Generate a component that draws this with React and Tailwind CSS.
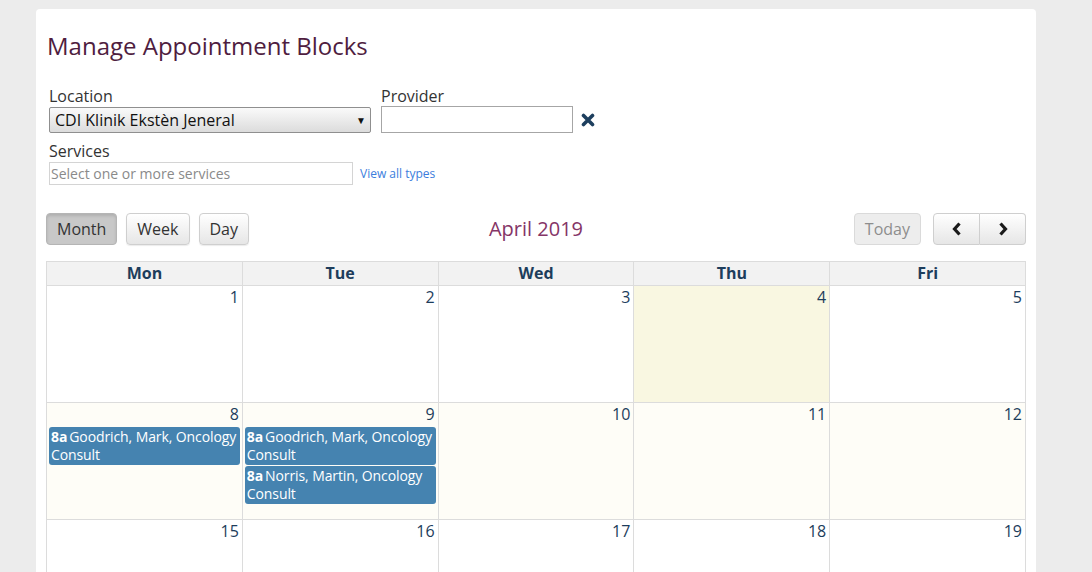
const days = ["Mon", "Tue", "Wed", "Thu", "Fri"];

const weeks = [
  [
    { n: 1 },
    { n: 2 },
    { n: 3 },
    { n: 4, today: true },
    { n: 5 },
  ],
  [
    {
      n: 8,
      tint: true,
      events: [{ time: "8a", name: "Goodrich, Mark, Oncology Consult" }],
    },
    {
      n: 9,
      tint: true,
      events: [
        { time: "8a", name: "Goodrich, Mark, Oncology Consult" },
        { time: "8a", name: "Norris, Martin, Oncology Consult" },
      ],
    },
    { n: 10, tint: true },
    { n: 11, tint: true },
    { n: 12, tint: true },
  ],
  [{ n: 15 }, { n: 16 }, { n: 17 }, { n: 18 }, { n: 19 }],
];

const btn =
  "h-8 px-[10px] rounded-[4px] border border-[#cfcfcf] text-[16px] text-[#333] bg-gradient-to-b from-white to-[#e6e6e6] shadow-[0_1px_1px_rgba(0,0,0,0.08)]";

function Chevron({ dir }) {
  return (
    <svg width="12" height="14" viewBox="0 0 12 14">
      {dir === "left" ? (
        <path d="M8.5 1.5 L3.5 7 L8.5 12.5" fill="none" stroke="#1a1a1a" strokeWidth="3.2" strokeLinejoin="miter" />
      ) : (
        <path d="M3.5 1.5 L8.5 7 L3.5 12.5" fill="none" stroke="#1a1a1a" strokeWidth="3.2" strokeLinejoin="miter" />
      )}
    </svg>
  );
}

export default function App() {
  return (
    <div
      className="min-h-[572px] bg-[#ececec] pt-[9px] pl-[36px] overflow-hidden"
      style={{ fontFamily: '"Open Sans", "Noto Sans", sans-serif' }}
    >
      <div className="w-[1000px] h-[600px] bg-white rounded-[4px] pt-[21px] px-[10px]">
        {/* ================= TITLE ================= */}
        <h1 className="ml-[1px] text-[24px] leading-[32px] text-[#4f1d40]">
          Manage Appointment Blocks
        </h1>

        {/* ================= FILTERS ================= */}
        <div className="mt-[24px] ml-[3px] flex gap-[10px]">
          <div className="w-[322px]">
            <div className="text-[16px] leading-[20px] text-[#333]">Location</div>
            <div className="mt-[1px] h-[26px] flex items-center justify-between pl-[5px] pr-[4px] border border-[#8f8f8f] rounded-[2px] bg-gradient-to-b from-[#fafafa] to-[#dcdcdc] text-[16px] text-[#111]">
              <span>CDI Klinik Ekstèn Jeneral</span>
              <span className="text-[10px] mt-[1px]">▼</span>
            </div>
          </div>
          <div>
            <div className="text-[16px] leading-[20px] text-[#333]">Provider</div>
            <div className="flex items-center gap-[8px]">
              <div className="w-[192px] h-[27px] border border-[#a6a6a6]" />
              <svg width="14" height="14" viewBox="0 0 14 14">
                <path d="M2.5 2.5 L11.5 11.5 M11.5 2.5 L2.5 11.5" stroke="#1d3f5e" strokeWidth="3.6" strokeLinecap="round" />
              </svg>
            </div>
          </div>
        </div>

        <div className="ml-[3px] mt-[8px] text-[16px] leading-[20px] text-[#333]">Services</div>
        <div className="ml-[3px] mt-[1px] flex items-center gap-[7px]">
          <div className="w-[304px] h-[23px] border border-[#d4d4d4] flex items-center pl-[1px] text-[14px] text-[#8a8a8a]">
            Select one or more services
          </div>
          <span className="text-[12px] text-[#3b7ddd]">View all types</span>
        </div>

        {/* ================= TOOLBAR ================= */}
        <div className="mt-[28px] flex items-center">
          <div className="flex-1 flex gap-[9px]">
            <button className="h-8 px-[10px] rounded-[4px] border border-[#b5b5b5] text-[16px] text-[#333] bg-[#c8c8c8] shadow-[inset_0_2px_3px_rgba(0,0,0,0.12)]">
              Month
            </button>
            <button className={btn}>Week</button>
            <button className={btn}>Day</button>
          </div>
          <div className="text-[20px] text-[#853567]">April 2019</div>
          <div className="flex-1 flex justify-end gap-[12px]">
            <button className="h-8 px-[10px] rounded-[4px] border border-[#dadada] text-[16px] text-[#8d8d8d] bg-[#ededed]">
              Today
            </button>
            <div className="flex">
              <button className="h-8 w-[47px] flex items-center justify-center rounded-l-[4px] border border-[#cfcfcf] bg-gradient-to-b from-white to-[#e6e6e6]">
                <Chevron dir="left" />
              </button>
              <button className="h-8 w-[46px] flex items-center justify-center rounded-r-[4px] border border-l-0 border-[#cfcfcf] bg-gradient-to-b from-white to-[#e6e6e6]">
                <Chevron dir="right" />
              </button>
            </div>
          </div>
        </div>

        {/* ================= CALENDAR ================= */}
        <div className="mt-[16px] w-[980px] border-l border-t border-[#dcdcdc]">
          <div className="grid grid-cols-5 bg-[#f2f2f2]">
            {days.map((d) => (
              <div
                key={d}
                className="h-[24px] border-r border-b border-[#dcdcdc] text-center text-[16px] leading-[23px] font-bold text-[#1d3d5c]"
              >
                {d}
              </div>
            ))}
          </div>
          {weeks.map((week, wi) => (
            <div key={wi} className="grid grid-cols-5">
              {week.map((c) => (
                <div
                  key={c.n}
                  className={`h-[117px] border-r border-b border-[#dcdcdc] px-[2px] ${
                    c.today ? "bg-[#f9f7e1]" : c.tint ? "bg-[#fefdf7]" : "bg-white"
                  }`}
                >
                  <div className="text-right pr-[1px] text-[16px] leading-[23px] text-[#1d3d5c]">
                    {c.n}
                  </div>
                  {c.events?.map((e, i) => (
                    <div
                      key={i}
                      className="mt-[1px] rounded-[3px] bg-[#4583b0] pl-[2px] pr-[1px] py-[1px] text-[14px] leading-[18px] text-white tracking-[-0.1px]"
                    >
                      <span className="font-bold">{e.time}</span>
                      <span className="ml-[2px]">{e.name}</span>
                    </div>
                  ))}
                </div>
              ))}
            </div>
          ))}
        </div>
      </div>
    </div>
  );
}
